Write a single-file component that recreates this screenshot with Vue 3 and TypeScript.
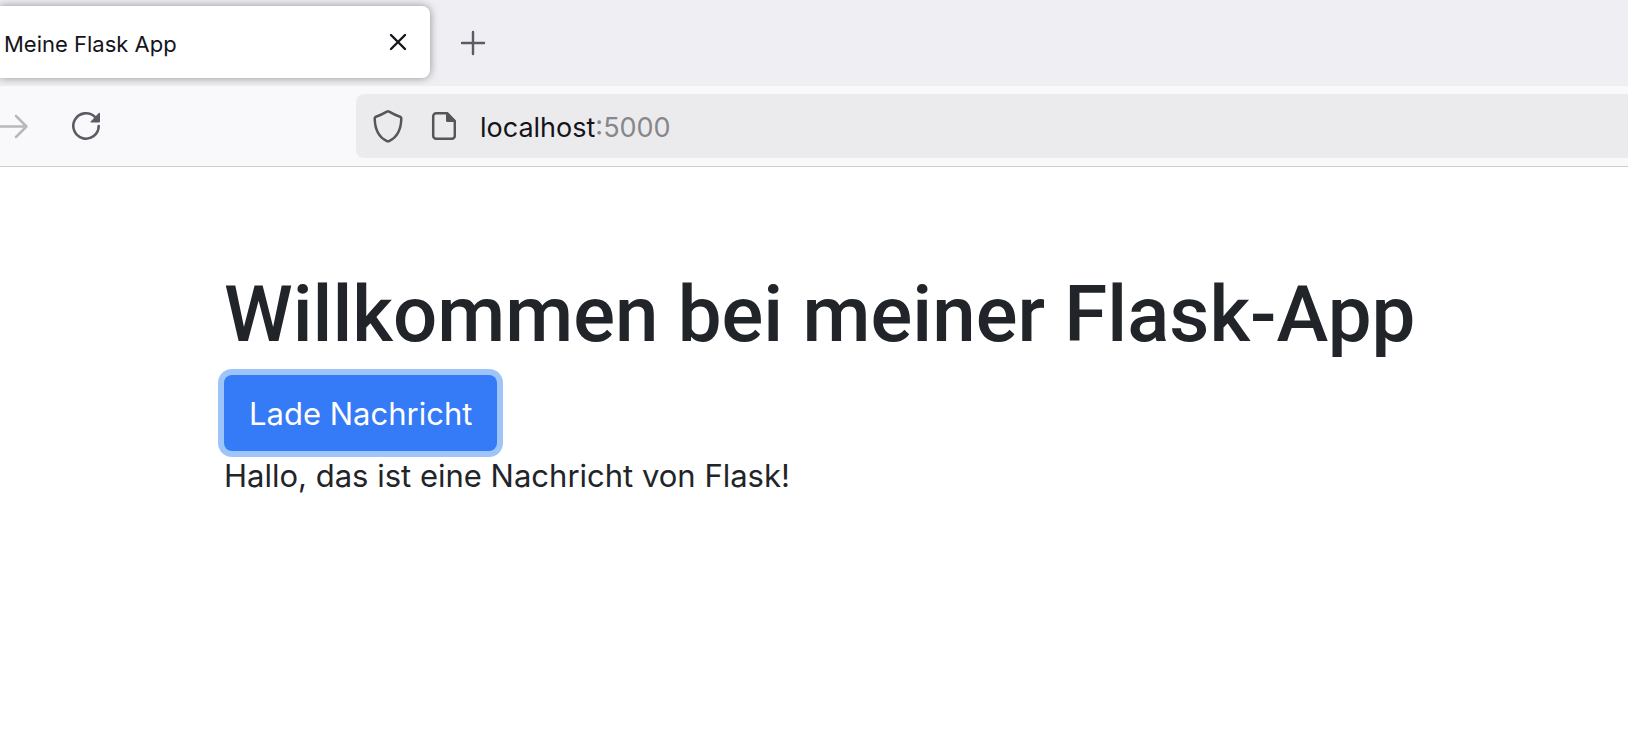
<script setup lang="ts">
import { ref } from 'vue'

const tabTitle = 'Meine Flask App'
const host = ref('localhost')
const port = ':5000'
const message = ref('Hallo, das ist eine Nachricht von Flask!')

function loadMessage(): void {
  message.value = 'Hallo, das ist eine Nachricht von Flask!'
}
</script>

<template>
  <div class="browser">
    <header>
      <div class="tab-strip">
        <div class="tab">
          <span class="tab-title">{{ tabTitle }}</span>
          <button class="icon-button" type="button" aria-label="Tab schließen">
            <svg width="32" height="32" viewBox="0 0 32 32" fill="none" stroke="#15141a" stroke-width="2.4" stroke-linecap="round">
              <path d="M9 9 23 23M23 9 9 23" />
            </svg>
          </button>
        </div>
        <button class="icon-button" type="button" aria-label="Neuer Tab">
          <svg width="32" height="32" viewBox="0 0 32 32" fill="none" stroke="#5b5b66" stroke-width="2.4" stroke-linecap="round">
            <path d="M16 5V27M5 16H27" />
          </svg>
        </button>
      </div>
      <div class="toolbar">
        <nav class="nav">
          <button class="icon-button" type="button" aria-label="Vor" disabled>
            <svg width="28" height="32" viewBox="0 0 28 32" fill="none" stroke="#b9b9bd" stroke-width="2.5" stroke-linecap="round" stroke-linejoin="round">
              <path d="M-2 16.500H26.500M16 6 26.500 16.500 16 27" />
            </svg>
          </button>
          <button class="icon-button" type="button" aria-label="Neu laden">
            <svg width="32" height="32" viewBox="0 0 32 32">
              <path d="M28.700 16A12.700 12.700 0 1 1 24.900 6.900" fill="none" stroke="#5b5b66" stroke-width="2.6" stroke-linecap="round" />
              <path d="M30 3.400V11.600a.9.9 0 0 1-.9.9H21.200a.6.600 0 0 1-.5-1L28.800 3a.7.700 0 0 1 1.200.4Z" fill="#5b5b66" />
            </svg>
          </button>
        </nav>
        <div class="url-bar">
          <svg width="32" height="34" viewBox="0 0 32 34" fill="none" stroke="#56565a" stroke-width="2.500" stroke-linejoin="round">
            <path d="M14.900 2.700Q16 2 17.100 2.700C20.500 4.700 24 6.500 28 7.700Q29.400 8.200 29.300 9.700C29 19.500 26.500 27.500 17.500 31.800Q16 32.600 14.500 31.800C5.500 27.500 3 19.500 2.700 9.700Q2.600 8.200 4 7.700C8 6.500 11.500 4.700 14.900 2.700Z" />
          </svg>
          <svg width="28" height="34" viewBox="0 0 28 34">
            <path d="M19 4.200H8.200a3 3 0 0 0-3 3V26.800a3 3 0 0 0 3 3H23.800a3 3 0 0 0 3-3V12.500Z" fill="none" stroke="#56565a" stroke-width="2.500" stroke-linejoin="round" />
            <path d="M18 3h1.500L28 11.500V13H19.500A1.500 1.500 0 0 1 18 11.500Z" fill="#56565a" />
          </svg>
          <div class="address">
            <input v-model="host" type="text" size="9" aria-label="Adresse" spellcheck="false" /><span class="port">{{ port }}</span>
          </div>
        </div>
      </div>
    </header>
    <main>
      <h1>Willkommen bei meiner Flask-App</h1>
      <button class="primary" type="button" @click="loadMessage">Lade Nachricht</button>
      <p aria-live="polite">{{ message }}</p>
    </main>
  </div>
</template>

<style>
body {
  margin: 0;
  background: #fff;
}
</style>

<style scoped>
.browser {
  min-height: 100vh;
  overflow: hidden;
  font-family: Inter, "Liberation Sans", sans-serif;
  color: #212529;
}

.tab-strip {
  display: flex;
  align-items: center;
  gap: 27px;
  background: #efeef3;
}

.tab {
  display: flex;
  align-items: center;
  justify-content: space-between;
  box-sizing: border-box;
  width: 430px;
  height: 72px;
  margin: 6px 0 8px;
  padding: 0 16px 0 4px;
  border-radius: 0 8px 8px 0;
  background: #fff;
  box-shadow: 0 0 8px rgba(0, 0, 0, 0.4);
}

.tab-title {
  padding-top: 4px;
  font-size: 22px;
  line-height: 28px;
  color: #15141a;
}

.icon-button {
  display: block;
  padding: 0;
  border: 0;
  background: none;
}

.icon-button svg {
  display: block;
}

.toolbar {
  display: flex;
  align-items: center;
  padding: 8px 0;
  border-bottom: 1px solid #cccccf;
  background: #f9f9fb;
}

.nav {
  display: flex;
  flex: none;
  align-items: center;
  gap: 42px;
  width: 356px;
}

.url-bar {
  display: flex;
  flex: 1;
  align-items: center;
  gap: 24px;
  height: 64px;
  padding-left: 16px;
  border-radius: 8px 0 0 8px;
  background: #ebebed;
}

.address {
  display: flex;
  align-items: center;
  padding-top: 4px;
  font-size: 27px;
  line-height: 36px;
}

.address input {
  field-sizing: content;
  padding: 0;
  border: 0;
  outline: 0;
  background: none;
  font: inherit;
  color: #15141a;
}

.port {
  color: #87878b;
}

main {
  padding: 100px 96px 0 224px;
}

h1 {
  margin: 0 0 12px;
  font-family: Roboto, "Liberation Sans", sans-serif;
  font-size: 78px;
  font-weight: 500;
  line-height: 96px;
}

.primary {
  display: block;
  padding: 15px 25px 13px;
  border: 0;
  border-radius: 8px;
  background: #357af6;
  box-shadow: 0 0 0 6px #9ec5fa;
  font: inherit;
  font-size: 31px;
  line-height: 48px;
  color: #fff;
}

p {
  margin: 0;
  font-size: 31px;
  line-height: 50px;
}
</style>
